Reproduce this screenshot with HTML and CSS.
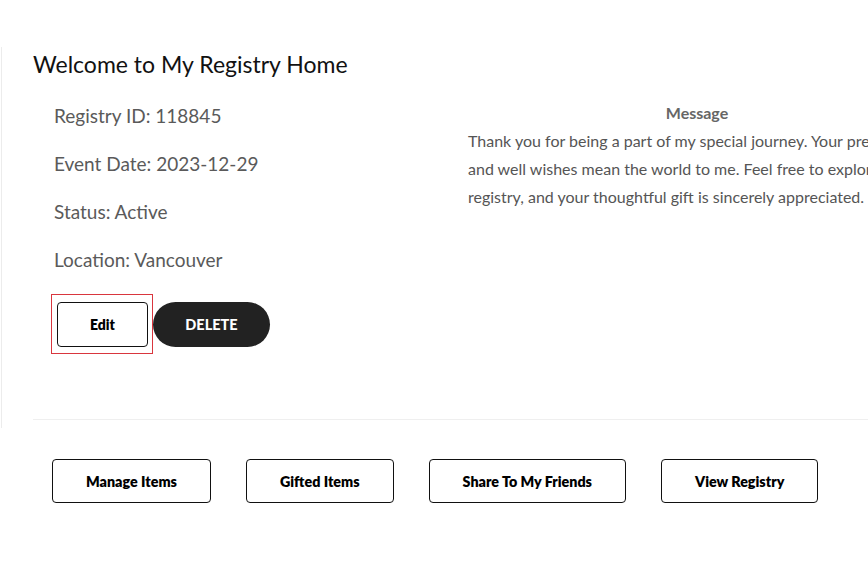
FILE: index.html
```html
<!DOCTYPE html>
<html lang="en">
<head>
    <meta charset="UTF-8">
    <meta name="viewport" content="width=device-width, initial-scale=1.0">
    <title>My Registry Home</title>
    <link rel="stylesheet" href="styles.css">
</head>
<body>
    <div class="panel">
        <h1>Welcome to My Registry Home</h1>
        <div class="info">
            <div class="details">
                <p>Registry ID: 118845</p>
                <p>Event Date: 2023-12-29</p>
                <p>Status: Active</p>
                <p>Location: Vancouver</p>
                <div class="actions">
                    <span class="focus-box"><button class="btn-edit">Edit</button></span>
                    <button class="btn-delete">DELETE</button>
                </div>
            </div>
            <div class="message">
                <h3>Message</h3>
                <p>Thank you for being a part of my special journey. Your presence and well wishes mean the world to me. Feel free to explore my registry, and your thoughtful gift is sincerely appreciated.</p>
            </div>
        </div>
    </div>
    <div class="links">
        <button>Manage Items</button>
        <button>Gifted Items</button>
        <button>Share To My Friends</button>
        <button>View Registry</button>
    </div>
</body>
</html>
```

FILE: styles.css
```css
body {
    font-family: Lato, "Liberation Sans", sans-serif;
    margin: 0;
    padding: 0;
    background: #fff;
    color: #111;
    overflow-x: hidden;
}
.panel {
    margin: 47px 0 0 1px;
    padding: 0 0 8px 31px;
    border-left: 1px solid #ececec;
}
.panel h1 {
    margin: 0;
    font-size: 23px;
    font-weight: 400;
    line-height: 34px;
    color: #111;
}
.info {
    display: flex;
    margin-top: 11px;
    padding-bottom: 65px;
    border-bottom: 1px solid #efefef;
}
.details {
    width: 414px;
    padding-left: 21px;
    flex-shrink: 0;
}
.details p {
    margin: 0;
    font-size: 19px;
    line-height: 48px;
    color: #5a5a5a;
}
.actions {
    display: flex;
    align-items: center;
    margin: 10px 0 0 -3px;
}
.focus-box {
    display: flex;
    padding: 7px 4px 6px 5px;
    border: 1px solid #d9363e;
}
.btn-edit {
    width: 91px;
    height: 45px;
    background: #fff;
    border: 1px solid #111;
    border-radius: 4px;
    font-family: inherit;
    font-size: 14px;
    font-weight: 800;
    color: #000;
    cursor: pointer;
}
.btn-delete {
    width: 117px;
    height: 45px;
    background: #222;
    border: none;
    border-radius: 23px;
    font-family: inherit;
    font-size: 14.5px;
    font-weight: 900;
    color: #fff;
    cursor: pointer;
}
.message {
    width: 458px;
    flex-shrink: 0;
    padding-top: 10px;
}
.message h3 {
    margin: 0;
    font-size: 16px;
    font-weight: 700;
    line-height: 22px;
    text-align: center;
    color: #666;
}
.message p {
    margin: 3px 0 0;
    font-size: 16px;
    line-height: 28px;
    color: #555;
}
.links {
    display: flex;
    gap: 35px;
    margin: 31px 0 0 52px;
}
.links button {
    height: 44px;
    padding: 0 33px;
    background: #fff;
    border: 1px solid #111;
    border-radius: 4px;
    font-family: inherit;
    font-size: 14.3px;
    font-weight: 800;
    color: #000;
    cursor: pointer;
}
```
